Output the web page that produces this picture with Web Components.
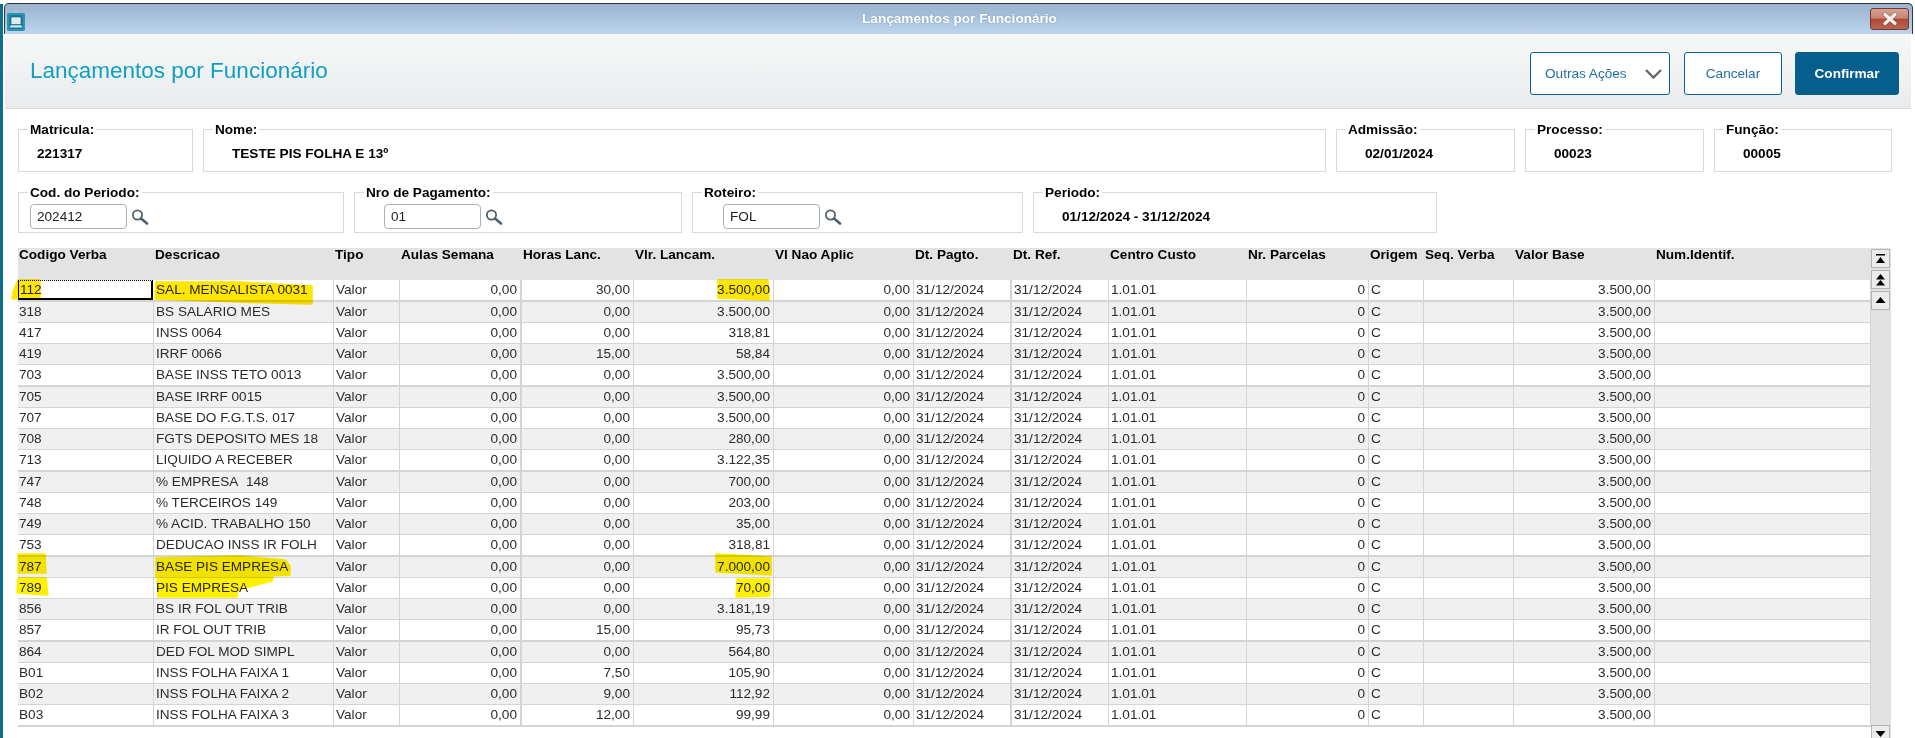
<!DOCTYPE html>
<html lang="pt-BR">
<head>
<meta charset="utf-8">
<title>Lançamentos por Funcionário</title>
<style>
  html, body { margin: 0; padding: 0; background: #fff; }
  body { font: 13.6px "Liberation Sans", Arial, sans-serif; color: #000; overflow: hidden; }
</style>
</head>
<body>
<app-window>
  <title-bar label="Lançamentos por Funcionário"></title-bar>
  <page-header label="Lançamentos por Funcionário">
    <action-button kind="menu">Outras Ações</action-button>
    <action-button style="width:98px;margin-left:14px">Cancelar</action-button>
    <action-button kind="primary" style="width:104px;margin-left:13px">Confirmar</action-button>
  </page-header>
  <field-row style="margin-top:13px">
    <field-group label="Matricula:" style="width:175px;--indent:18px">221317</field-group>
    <field-group label="Nome:" style="width:1123px;--indent:28px">TESTE PIS FOLHA E 13º</field-group>
    <field-group label="Admissão:" style="width:179px;--indent:28px">02/01/2024</field-group>
    <field-group label="Processo:" style="width:179px;--indent:28px">00023</field-group>
    <field-group label="Função:" style="width:178px;--indent:28px">00005</field-group>
  </field-row>
  <field-row style="margin-top:13px">
    <field-group label="Cod. do Periodo:" style="width:326px;--indent:11px;--box:48px"><lookup-input value="202412"></lookup-input></field-group>
    <field-group label="Nro de Pagamento:" style="width:328px;--indent:29px;--box:48px"><lookup-input value="01"></lookup-input></field-group>
    <field-group label="Roteiro:" style="width:331px;--indent:30px;--box:48px"><lookup-input value="FOL"></lookup-input></field-group>
    <field-group label="Periodo:" style="width:404px;--indent:28px;--box:48px">01/12/2024 - 31/12/2024</field-group>
  </field-row>
  <data-grid style="margin-top:15px"></data-grid>
  <marker-overlay></marker-overlay>
</app-window>

<script>
customElements.define('app-window', class AppWindow extends HTMLElement {
  constructor() {
    super();
    this.attachShadow({mode: 'open'});
    this.shadowRoot.innerHTML = this.template;
  }
  get template() {
    return `<style>
      :host {
        display: block;
        position: relative;
        height: 738px;
        overflow: hidden;
        background: #fff;
      }
      .strip {
        position: absolute;
        left: 0;
        top: 4px;
        bottom: 0;
        width: 3px;
        background: #0e6f8e;
      }
      .frame {
        display: flex;
        flex-direction: column;
        padding-top: 3px;
      }
    </style>
    <div class="strip"></div>
    <div class="frame"><slot></slot></div>
    `
  }
});

customElements.define('title-bar', class TitleBar extends HTMLElement {
  constructor() {
    super();
    this.attachShadow({mode: 'open'});
    this.shadowRoot.innerHTML = this.template;
  }
  get template() {
    return `<style>
      :host {
        display: grid;
        grid-template-columns: 1fr auto 1fr;
        align-items: center;
        height: 31px;
        box-sizing: border-box;
        margin: 0 2px 0 4px;
        padding-left: 2px;
        padding-right: 3px;
        border: 1px solid #2f3338;
        border-bottom: none;
        border-radius: 5px 5px 0 0;
        background: linear-gradient(#9ab3ce, #bdd5ed);
      }
      .icon { display: block; margin-top: 6px; }
      .label { color: #fff; font-weight: bold; text-shadow: 0 0 2px #7f9ab8; padding: 0 0 1px 3px; }
      .close {
        justify-self: end;
        width: 39px;
        height: 22px;
        box-sizing: border-box;
        border: 1px solid #6d3a38;
        border-radius: 3px;
        background: linear-gradient(#d6a093 0, #c98573 45%, #b04a36 52%, #bb6350 100%);
        display: flex;
        align-items: center;
        justify-content: center;
      }
    </style>
    <svg class="icon" width="18" height="18" viewBox="0 0 18 18">
      <rect width="18" height="18" rx="2" fill="#12809f"/>
      <rect x="1" y="1" width="16" height="16" rx="1.5" fill="none" stroke="#5db3cb" stroke-width=".8"/>
      <rect x="4" y="4" width="10" height="7.5" fill="#dfeaf2" stroke="#0b5d78" stroke-width=".6"/>
      <path d="M2.5 14.5 L4 12.2 H14 L15.5 14.5 Z" fill="#d5e4ee"/>
    </svg>
    <span class="label">${this.getAttribute('label')}</span>
    <span class="close">
      <svg width="16" height="14" viewBox="0 0 16 14">
        <path d="M3 2.5 L13 11.5 M13 2.5 L3 11.5" stroke="#7d4a44" stroke-width="4.4" stroke-linecap="round" fill="none" opacity=".55"/>
        <path d="M3 2.5 L13 11.5 M13 2.5 L3 11.5" stroke="#f1f1f1" stroke-width="3.2" stroke-linecap="round" fill="none"/>
      </svg>
    </span>
    `
  }
});

customElements.define('page-header', class PageHeader extends HTMLElement {
  constructor() {
    super();
    this.attachShadow({mode: 'open'});
    this.shadowRoot.innerHTML = this.template;
  }
  get template() {
    return `<style>
      :host {
        display: flex;
        align-items: center;
        height: 75px;
        box-sizing: border-box;
        margin: 0 4px 0 5px;
        padding: 0 12px 0 25px;
        background: linear-gradient(#f6f8f8, #e9ebed);
        border-bottom: 1px solid #d8d8d8;
      }
      h1 {
        flex: 1;
        margin: 0;
        font-size: 22.5px;
        font-weight: normal;
        color: #0f9fc4;
      }
    </style>
    <h1>${this.getAttribute('label')}</h1>
    <slot></slot>
    `
  }
});

customElements.define('action-button', class ActionButton extends HTMLElement {
  constructor() {
    super();
    this.attachShadow({mode: 'open'});
    this.shadowRoot.innerHTML = this.template;
    if (this.getAttribute('kind') === 'menu') {
      this.shadowRoot.querySelector('svg').style.display = 'block';
    }
  }
  get template() {
    return `<style>
      :host {
        display: flex;
        align-items: center;
        justify-content: center;
        box-sizing: border-box;
        height: 43px;
        margin-top: 4px;
        border: 1px solid #0b5f8c;
        border-radius: 3px;
        background: #fff;
        color: #1f6fa0;
      }
      :host([kind="menu"]) { width: 140px; justify-content: flex-start; padding-left: 14px; }
      :host([kind="primary"]) { background: #055e8e; color: #fff; font-weight: bold; }
      svg { display: none; margin: 2px 0 0 18px; }
    </style>
    <slot></slot>
    <svg width="17" height="10" viewBox="0 0 17 10"><path d="M1 1 L8.5 8.5 L16 1" fill="none" stroke="#666" stroke-width="2.4"/></svg>
    `
  }
});

customElements.define('field-row', class FieldRow extends HTMLElement {
  constructor() {
    super();
    this.attachShadow({mode: 'open'});
    this.shadowRoot.innerHTML = this.template;
  }
  get template() {
    return `<style>
      :host {
        display: flex;
        gap: 10px;
        padding-left: 18px;
      }
    </style>
    <slot></slot>
    `
  }
});

customElements.define('field-group', class FieldGroup extends HTMLElement {
  constructor() {
    super();
    this.attachShadow({mode: 'open'});
    this.shadowRoot.innerHTML = this.template;
  }
  get template() {
    return `<style>
      :host {
        display: block;
        flex: none;
        box-sizing: border-box;
      }
      fieldset {
        margin: 0;
        padding: 0;
        height: var(--box, 50px);
        box-sizing: border-box;
        border: 1px solid #d9d9d9;
        min-width: 0;
      }
      legend {
        margin-left: 9px;
        padding: 0 2px;
        font-weight: bold;
        line-height: 15px;
      }
      .value { font-weight: bold; padding: 9px 0 0 var(--indent, 18px); line-height: 15px; }
      ::slotted(lookup-input) { margin-top: -5px; }
    </style>
    <fieldset>
      <legend>${this.getAttribute('label')}</legend>
      <div class="value"><slot></slot></div>
    </fieldset>
    `
  }
});

customElements.define('lookup-input', class LookupInput extends HTMLElement {
  constructor() {
    super();
    this.attachShadow({mode: 'open'});
    this.shadowRoot.innerHTML = this.template;
  }
  get template() {
    return `<style>
      :host {
        display: flex;
        align-items: center;
        gap: 4px;
        font-weight: normal;
      }
      .box {
        width: 97px;
        height: 25px;
        box-sizing: border-box;
        padding-left: 6px;
        border: 1px solid #a9b0b6;
        border-radius: 4px;
        line-height: 23px;
        color: #222;
        background: #fff;
      }
    </style>
    <span class="box">${this.getAttribute('value')}</span>
    <svg width="18" height="16" viewBox="0 0 18 16">
      <circle cx="6.5" cy="6" r="4.6" fill="#fff" stroke="#4f5f6b" stroke-width="1.8"/>
      <path d="M10 9.5 L16 14.5" stroke="#4f5f6b" stroke-width="2.6" stroke-linecap="round"/>
    </svg>
    `
  }
});

const COLUMNS = [
  ['Codigo Verba', 136], ['Descricao', 180], ['Tipo', 66], ['Aulas Semana', 122], ['Horas Lanc.', 112],
  ['Vlr. Lancam.', 140], ['Vl Nao Aplic', 140], ['Dt. Pagto.', 98], ['Dt. Ref.', 97], ['Centro Custo', 138],
  ['Nr. Parcelas', 122], ['Origem', 55], ['Seq. Verba', 90], ['Valor Base', 141], ['Num.Identif.', 216]
];

const ROWS = [
  ['112', 'SAL. MENSALISTA 0031', '30,00', '3.500,00'],
  ['318', 'BS SALARIO MES', '0,00', '3.500,00'],
  ['417', 'INSS 0064', '0,00', '318,81'],
  ['419', 'IRRF 0066', '15,00', '58,84'],
  ['703', 'BASE INSS TETO 0013', '0,00', '3.500,00'],
  ['705', 'BASE IRRF 0015', '0,00', '3.500,00'],
  ['707', 'BASE DO F.G.T.S. 017', '0,00', '3.500,00'],
  ['708', 'FGTS DEPOSITO MES 18', '0,00', '280,00'],
  ['713', 'LIQUIDO A RECEBER', '0,00', '3.122,35'],
  ['747', '% EMPRESA&nbsp; 148', '0,00', '700,00'],
  ['748', '% TERCEIROS 149', '0,00', '203,00'],
  ['749', '% ACID. TRABALHO 150', '0,00', '35,00'],
  ['753', 'DEDUCAO INSS IR FOLH', '0,00', '318,81'],
  ['787', 'BASE PIS EMPRESA', '0,00', '7.000,00'],
  ['789', 'PIS EMPRESA', '0,00', '70,00'],
  ['856', 'BS IR FOL OUT TRIB', '0,00', '3.181,19'],
  ['857', 'IR FOL OUT TRIB', '15,00', '95,73'],
  ['864', 'DED FOL MOD SIMPL', '0,00', '564,80'],
  ['B01', 'INSS FOLHA FAIXA 1', '7,50', '105,90'],
  ['B02', 'INSS FOLHA FAIXA 2', '9,00', '112,92'],
  ['B03', 'INSS FOLHA FAIXA 3', '12,00', '99,99']
];

customElements.define('data-grid', class DataGrid extends HTMLElement {
  constructor() {
    super();
    this.attachShadow({mode: 'open'});
    this.shadowRoot.innerHTML = this.template;
  }
  _row([code, desc, horas, valor], i) {
    const cells = [
      [code], [desc], ['Valor'], ['0,00', 'r'], [horas, 'r'], [valor, 'r'], ['0,00', 'r'],
      ['31/12/2024'], ['31/12/2024'], ['1.01.01'], ['0', 'r'], ['C'], [''], ['3.500,00', 'r'], ['']
    ];
    const cls = ['row', i % 2 ? 'alt' : '', i % 4 === 0 ? 'thick' : ''].join(' ');
    return `<div class="${cls}">${cells.map(([text, align], c) =>
      `<div class="cell ${align || ''} ${i === 0 && c === 0 ? 'current' : ''}">${text}</div>`).join('')}</div>`;
  }
  get template() {
    const columns = COLUMNS.map(c => c[1] + 'px').join(' ');
    return `<style>
      :host {
        display: flex;
        margin-left: 18px;
        width: 1873px;
        height: 491px;
        overflow: hidden;
      }
      .table { width: 1853px; flex: none; color: #2b2b2b; }
      .head, .row { display: grid; grid-template-columns: ${columns}; }
      .head {
        height: 32px;
        background: #e3e3e3;
        color: #000;
        font-weight: bold;
        line-height: 13px;
      }
      .head div { padding-left: 1px; white-space: nowrap; }
      .row {
        height: 21px;
        box-sizing: border-box;
        border-bottom: 1px solid #d4d4d4;
        line-height: 19px;
        background: #fff;
      }
      .row.alt { background: #f0f0f0; }
      .row.thick { height: 22px; border-bottom-width: 2px; }
      .cell {
        padding: 0 3px 0 2px;
        border-right: 1px solid #d4d4d4;
        white-space: nowrap;
        overflow: hidden;
      }
      .cell:first-child { padding-left: 1px; }
      .cell:nth-child(4), .cell:nth-child(8) { border-right-width: 2px; }
      .cell.r { text-align: right; }
      .cell.current {
        border-top: 1px dotted #000;
        border-left: 1px solid #000;
        border-right: 2px solid #000;
        border-bottom: 2px solid #000;
        margin-right: 1px;
        line-height: 17px;
      }
      .bar {
        width: 20px;
        flex: none;
        background: #e1e1e1;
        display: flex;
        flex-direction: column;
        gap: 2px;
        padding-top: 1px;
        box-sizing: border-box;
      }
      .btn {
        width: 19px;
        height: 19px;
        box-sizing: border-box;
        border: 1px solid #b4b4b4;
        background: #ececec;
        display: flex;
        align-items: center;
        justify-content: center;
      }
      .down { margin-top: auto; position: relative; top: 5px; }
    </style>
    <div class="table">
      <div class="head">${COLUMNS.map(c => `<div>${c[0]}</div>`).join('')}</div>
      ${ROWS.map((r, i) => this._row(r, i)).join('')}
    </div>
    <div class="bar">
      <span class="btn"><svg width="11" height="10" viewBox="0 0 11 10"><path d="M1 0 H10 V1.5 H1 Z M5.5 3 L10 9 H1 Z"/></svg></span>
      <span class="btn"><svg width="11" height="12" viewBox="0 0 11 12"><path d="M5.5 0 L10 5.5 H1 Z M5.5 6 L10 11.5 H1 Z"/></svg></span>
      <span class="btn"><svg width="11" height="7" viewBox="0 0 11 7"><path d="M5.5 0 L10.5 6 H.5 Z"/></svg></span>
      <span class="btn down"><svg width="11" height="7" viewBox="0 0 11 7"><path d="M5.5 6 L10.5 0 H.5 Z"/></svg></span>
    </div>
    `
  }
});

// the marker strokes someone drew on the screenshot sit on top of the grid
customElements.define('marker-overlay', class MarkerOverlay extends HTMLElement {
  constructor() {
    super();
    this.attachShadow({mode: 'open'});
    this.shadowRoot.innerHTML = this.template;
  }
  get template() {
    const marks = [
      ['18,280 40,280 40,298 12,299 13,292', '#ffe600'],
      ['156,282 240,282 312,286 312,304 240,302 155,299', '#ffe600'],
      ['718,280 768,280 769,300 718,298', '#ffe600'],
      ['18,554 45,554 46,573 18,573', '#fff000'],
      ['156,558 240,556 285,560 290,566 290,575 250,577 156,577', '#fff000'],
      ['18,578 46,578 48,595 17,593', '#fff000'],
      ['157,579 200,578 273,577 272,581 238,590 237,597 158,597', '#fff000'],
      ['716,554 771,557 771,575 716,572', '#fff000'],
      ['737,579 770,579 770,596 736,597', '#fff000']
    ];
    return `<style>
      :host {
        position: absolute;
        left: 0;
        top: 0;
        mix-blend-mode: multiply;
        pointer-events: none;
      }
      svg { display: block; }
    </style>
    <svg width="1915" height="738">
      ${marks.map(([p, c]) => `<polygon points="${p}" fill="${c}" stroke="${c}" stroke-width="1.5" stroke-linejoin="round"/>`).join('')}
    </svg>
    `
  }
});
</script>
</body>
</html>
